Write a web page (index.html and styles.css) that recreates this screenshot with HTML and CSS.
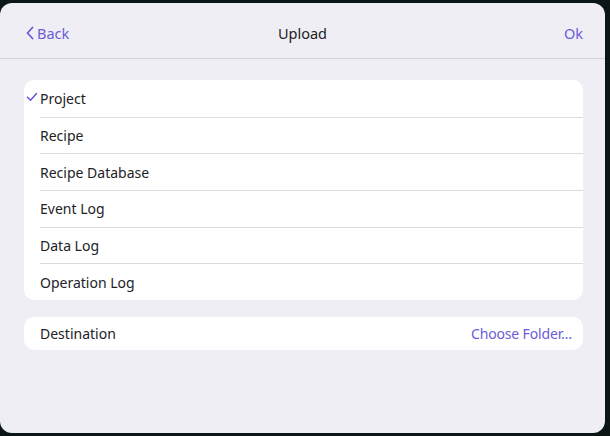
FILE: index.html
```html
<!DOCTYPE html>
<html>
<head>
<meta charset="utf-8">
<link rel="stylesheet" href="styles.css">
</head>
<body>
<div class="panel">
  <header class="header">
    <div class="back">
      <svg class="chev" width="10" height="14" viewBox="0 0 10 14"><path d="M7.5 1.5 L2.5 7 L7.5 12.5" fill="none" stroke="currentColor" stroke-width="1.8" stroke-linecap="round" stroke-linejoin="round"/></svg>
      <span>Back</span>
    </div>
    <div class="title">Upload</div>
    <div class="ok">Ok</div>
  </header>
  <div class="content">
    <div class="card list">
      <div class="row checked">
        <svg class="check" width="12" height="10" viewBox="0 0 12 10"><path d="M1.5 5.2 L4.5 8.3 L10.5 1.5" fill="none" stroke="currentColor" stroke-width="1.6" stroke-linecap="round" stroke-linejoin="round"/></svg>
        <span class="label">Project</span>
      </div>
      <div class="row"><span class="label">Recipe</span></div>
      <div class="row"><span class="label">Recipe Database</span></div>
      <div class="row"><span class="label">Event Log</span></div>
      <div class="row"><span class="label">Data Log</span></div>
      <div class="row"><span class="label">Operation Log</span></div>
    </div>
    <div class="card dest">
      <span class="dlabel">Destination</span>
      <span class="choose">Choose Folder…</span>
    </div>
  </div>
</div>
</body>
</html>
```
FILE: styles.css
```css
html, body {
  margin: 0;
  padding: 0;
}
body {
  width: 610px;
  height: 436px;
  background: #0b1616;
  font-family: "Noto Sans", "Open Sans", sans-serif;
  font-size: 14px;
  color: #222226;
  overflow: hidden;
}
.panel {
  margin-top: 3px;
  width: 605px;
  height: 430px;
  background: #efeef4;
  border-radius: 12px;
  overflow: hidden;
}
.header {
  height: 56px;
  box-sizing: border-box;
  padding: 4px 22px 0 25px;
  border-bottom: 1px solid #d3d2d8;
  display: flex;
  align-items: center;
  justify-content: space-between;
  position: relative;
}
.back {
  display: flex;
  align-items: center;
  gap: 2px;
  color: #6b5cd8;
  font-size: 14.5px;
}
.chev { display: block; }
.title {
  position: absolute;
  left: 0;
  right: 0;
  top: 4px;
  bottom: 0;
  display: flex;
  align-items: center;
  justify-content: center;
  font-size: 14.5px;
  color: #222226;
  pointer-events: none;
}
.ok {
  color: #6b5cd8;
  font-size: 14.5px;
}
.content {
  padding: 21px 22px 0 24px;
  display: flex;
  flex-direction: column;
  gap: 17px;
}
.card {
  background: #ffffff;
  border-radius: 10px;
}
.row {
  height: 36.7px;
  display: flex;
  align-items: center;
  margin-left: 16px;
  position: relative;
  box-sizing: border-box;
}
.row + .row {
  border-top: 1px solid #dcdbe0;
}
.check {
  position: absolute;
  left: -14px;
  top: 12px;
  color: #6b5cd8;
}
.dest {
  height: 33px;
  display: flex;
  align-items: center;
  justify-content: space-between;
  padding: 0 11px 0 16px;
}
.choose {
  color: #6b5cd8;
  letter-spacing: -0.15px;
}
```
